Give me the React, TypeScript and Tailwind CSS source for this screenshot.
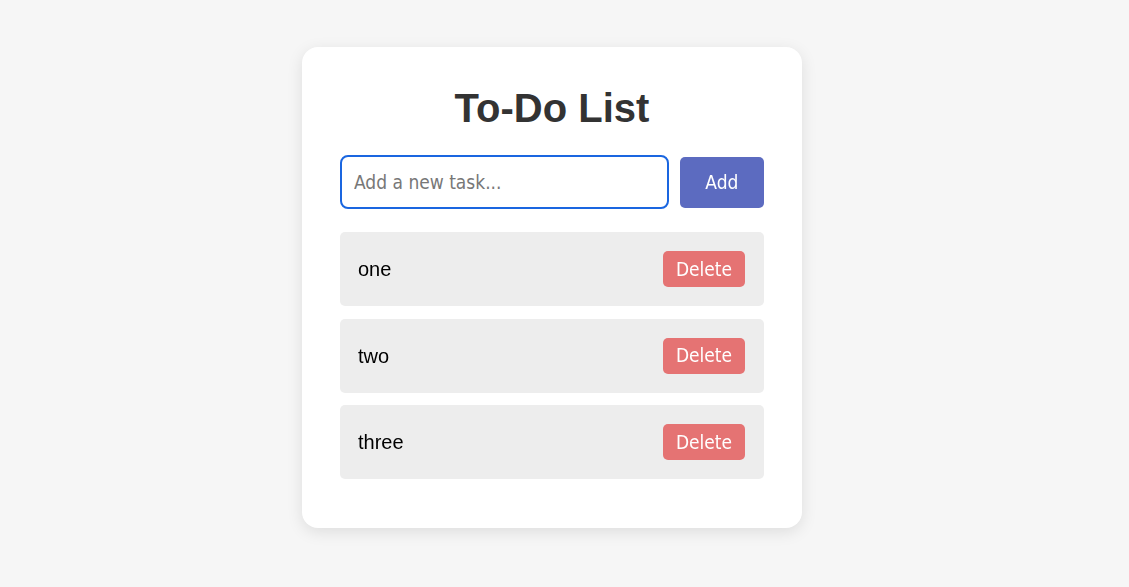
import React from "react";

const tahoma = { fontFamily: '"DejaVu Sans", sans-serif', fontStretch: "condensed" as const };

export default function App() {
  const items = ["one", "two", "three"];
  return (
    <div className="min-h-[587px] w-full bg-[#f6f6f6] flex justify-center pt-[47px] pr-[25px]">
      <div className="w-[500px] h-[481px] bg-white rounded-[16px] shadow-[0_4px_16px_rgba(0,0,0,0.1)] px-[38px] pt-[38px] pb-[49px] flex flex-col">
        <h1
          className="text-center text-[40px] leading-[46px] font-bold text-[#333]"
          style={{ fontFamily: '"Liberation Sans", Arial, sans-serif' }}
        >
          To-Do List
        </h1>
        <div className="mt-[24px] flex items-center gap-[11px]">
          <input
            autoFocus
            placeholder="Add a new task..."
            className="w-[331px] h-[54px] rounded-[8px] border-2 border-[#1a66e0] px-[12px] text-[19px] text-black placeholder:text-[#777] outline-none"
            style={tahoma}
          />
          <button
            className="w-[85px] h-[51px] rounded-[5px] bg-[#5c6bc0] text-white text-[19px]"
            style={tahoma}
          >
            Add
          </button>
        </div>
        <ul className="mt-[23px] flex flex-col gap-[12.5px]">
          {items.map((t) => (
            <li
              key={t}
              className="h-[74px] bg-[#ededed] rounded-[5px] flex items-center justify-between pl-[18px] pr-[19px]"
            >
              <span
                className="text-[20px] text-black"
                style={{ fontFamily: '"Liberation Sans", Arial, sans-serif' }}
              >
                {t}
              </span>
              <button
                className="w-[82px] h-[36px] rounded-[5px] bg-[#e57373] text-white text-[19px]"
                style={tahoma}
              >
                Delete
              </button>
            </li>
          ))}
        </ul>
      </div>
    </div>
  );
}
